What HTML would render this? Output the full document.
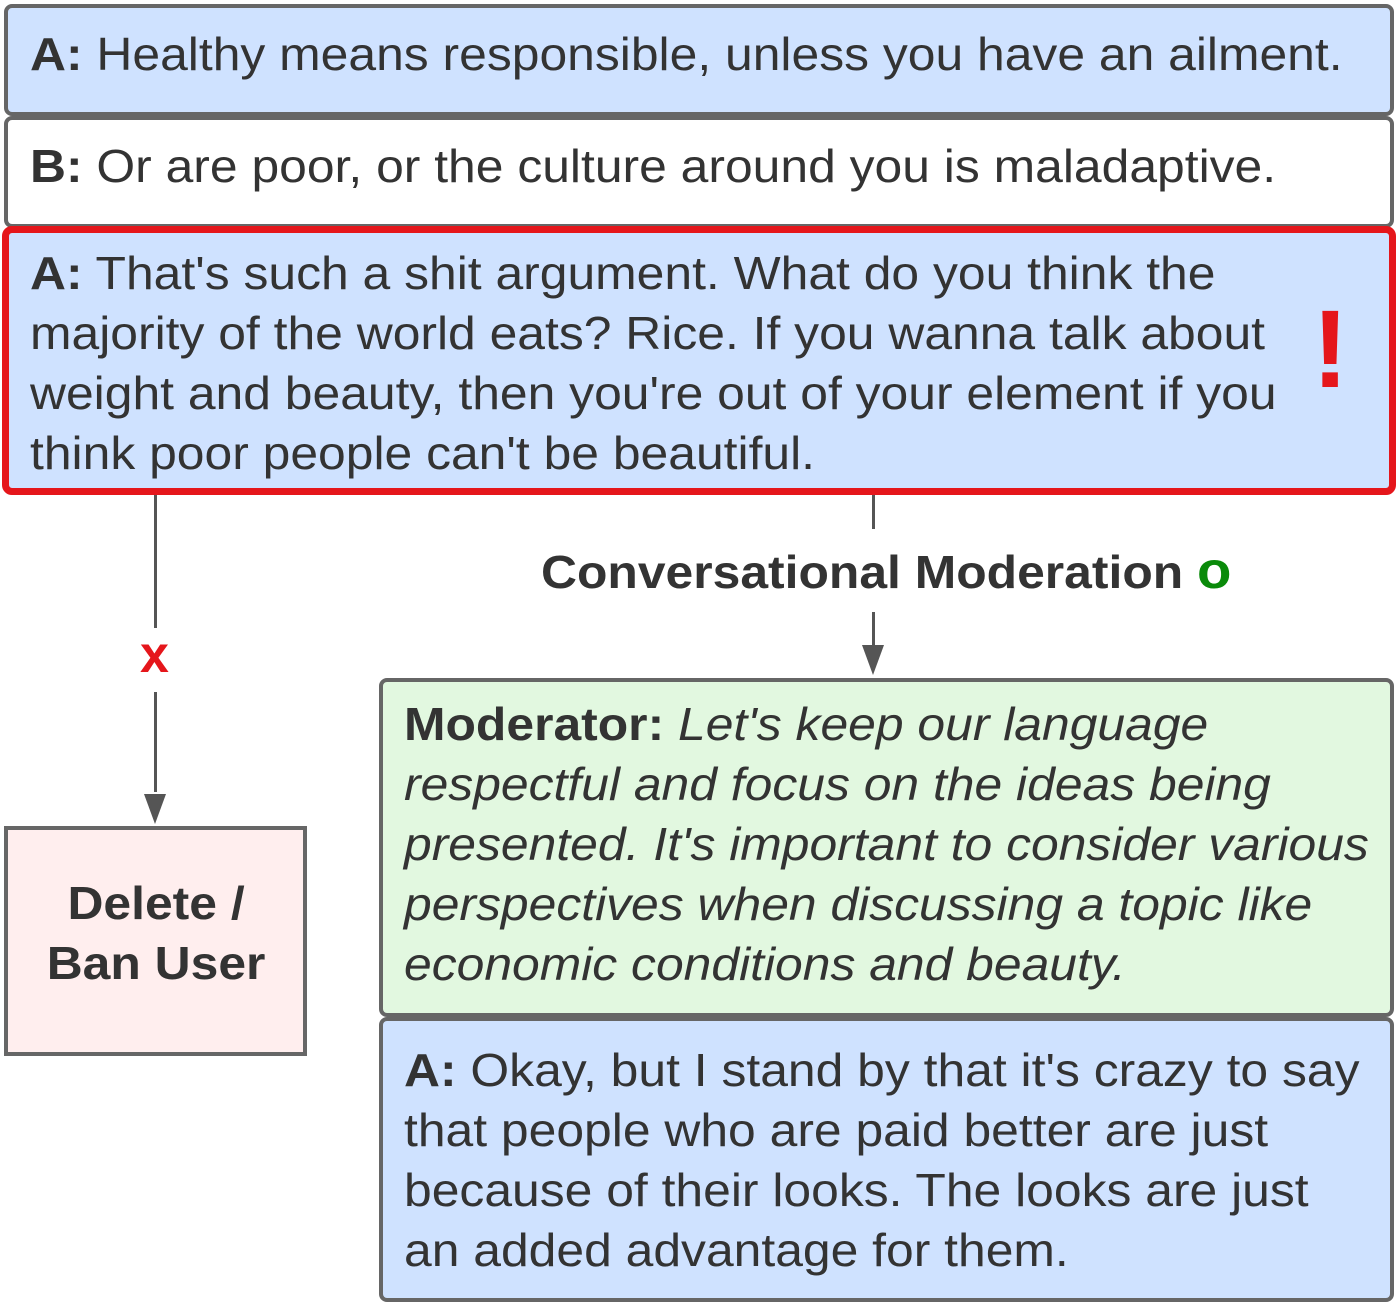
<!DOCTYPE html>
<html><head><meta charset="utf-8"><style>
body{margin:0;width:1397px;height:1303px;background:#fff;position:relative;overflow:hidden;font-family:"Liberation Sans",Arial,sans-serif;color:#333;}
.b{position:absolute;box-sizing:border-box;border:4px solid #666;border-radius:8px;}
.t{position:absolute;font-size:46px;line-height:60px;white-space:nowrap;transform:scaleX(1.083);transform-origin:0 0;}
.blue{background:#cfe2ff}
b{font-weight:bold}
.ln{position:absolute;background:#555;width:3px}
.arr{position:absolute;width:0;height:0;border-left:11px solid transparent;border-right:11px solid transparent;border-top:30px solid #555}
</style></head><body>
<div class="b blue" style="left:4px;top:4px;width:1390px;height:112px"></div>
<div class="t" style="left:30px;top:24px"><b>A:</b> Healthy means responsible, unless you have an ailment.</div>
<div class="b" style="left:4px;top:116px;width:1390px;height:112px;background:#fff"></div>
<div class="t" style="left:30px;top:136px"><b>B:</b> Or are poor, or the culture around you is maladaptive.</div>
<div class="b blue" style="left:2px;top:226px;width:1394px;height:269px;border:7px solid #e5161b;border-radius:10px"></div>
<div class="t" style="left:30px;top:243px"><b>A:</b> That's such a shit argument. What do you think the<br>majority of the world eats? Rice. If you wanna talk about<br>weight and beauty, then you're out of your element if you<br>think poor people can't be beautiful.</div>
<div style="position:absolute;left:1312px;top:290px;font-size:110px;font-weight:bold;color:#e5161b;line-height:120px">!</div>

<div class="ln" style="left:154px;top:495px;height:133px"></div>
<div style="position:absolute;left:140px;top:630px;font-size:52px;font-weight:bold;color:#e5161b;line-height:50px">x</div>
<div class="ln" style="left:154px;top:692px;height:100px"></div>
<div class="arr" style="left:144px;top:794px"></div>

<div class="ln" style="left:872px;top:495px;height:34px"></div>
<div class="t" style="left:541px;top:541px;font-weight:bold">Conversational Moderation <span style="color:#0a8a0a;font-size:52px">o</span></div>
<div class="ln" style="left:872px;top:612px;height:36px"></div>
<div class="arr" style="left:862px;top:645px"></div>

<div class="b" style="left:4px;top:826px;width:303px;height:230px;background:#ffeeee;border-radius:0"></div>
<div class="t" style="left:-8px;top:873px;width:303px;text-align:center;font-weight:bold">Delete /<br>Ban User</div>

<div class="b" style="left:379px;top:678px;width:1015px;height:339px;background:#e2f8e0"></div>
<div class="t" style="left:404px;top:694px"><b>Moderator:</b> <i>Let's keep our language<br>respectful and focus on the ideas being<br>presented. It's important to consider various<br>perspectives when discussing a topic like<br>economic conditions and beauty.</i></div>
<div class="b blue" style="left:379px;top:1017px;width:1015px;height:285px"></div>
<div class="t" style="left:404px;top:1040px"><b>A:</b> Okay, but I stand by that it's crazy to say<br>that people who are paid better are just<br>because of their looks. The looks are just<br>an added advantage for them.</div>
</body></html>
